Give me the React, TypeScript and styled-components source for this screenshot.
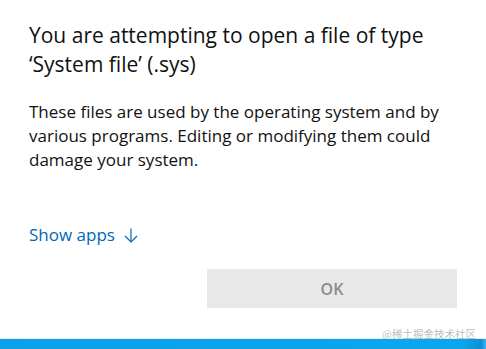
import React from "react";
import styled, { createGlobalStyle } from "styled-components";

const Global = createGlobalStyle`
  html, body { margin: 0; padding: 0; background: #ffffff; }
  body { font-family: "Segoe UI", "Open Sans", "Noto Sans", sans-serif; }
`;

const Page = styled.div`
  position: relative;
  width: 486px;
  height: 349px;
  display: flex;
  flex-direction: column;
  background: #ffffff;
  overflow: hidden;
`;

const Dialog = styled.div`
  flex: 1;
  display: flex;
  flex-direction: column;
  padding: 21px 29px 0 29px;
  border-bottom: 1px solid #ececec;
`;

const Title = styled.h1`
  margin: 0;
  font-size: 21px;
  line-height: 29px;
  font-weight: 400;
  color: #111111;
  white-space: nowrap;
`;

const Body = styled.p`
  margin: 21px 0 0 0;
  font-size: 17px;
  line-height: 24px;
  color: #111111;
  white-space: nowrap;
`;

const LinkRow = styled.div`
  margin-top: 51px;
  display: flex;
`;

const Link = styled.a`
  display: inline-flex;
  align-items: center;
  gap: 9px;
  font-size: 17px;
  line-height: 24px;
  color: #0067b8;
  text-decoration: none;
  cursor: pointer;
`;

const Actions = styled.div`
  display: flex;
  justify-content: flex-end;
  margin-top: 22px;
`;

const OkButton = styled.button`
  width: 250px;
  height: 39px;
  border: none;
  background: #e8e8e8;
  color: #8c8c8c;
  font-family: inherit;
  font-size: 16px;
  font-weight: 600;
`;

const Taskbar = styled.div`
  height: 10px;
  background: linear-gradient(to right, #0aa0ea, #0ca6ee 95%, #0b8fd6 99%, #38b8f2);
`;

const Watermark = styled.span`
  position: absolute;
  right: 10px;
  bottom: 8px;
  font-family: "Noto Sans CJK SC", sans-serif;
  font-size: 10.5px;
  color: rgba(120, 120, 120, 0.5);
`;

const ArrowDown = () => (
  <svg width="14" height="15" viewBox="0 0 14 15" fill="none" stroke="#0067b8" strokeWidth="1.2">
    <path d="M7 0.5 V14" />
    <path d="M1 8 L7 14 L13 8" />
  </svg>
);

export default function App() {
  return (
    <>
      <Global />
      <Page>
        <Dialog>
          <Title>
            You are attempting to open a file of type
            <br />
            ‘System file’ (.sys)
          </Title>
          <Body>
            These files are used by the operating system and by
            <br />
            various programs. Editing or modifying them could
            <br />
            damage your system.
          </Body>
          <LinkRow>
            <Link>
              Show apps <ArrowDown />
            </Link>
          </LinkRow>
          <Actions>
            <OkButton>OK</OkButton>
          </Actions>
        </Dialog>
        <Taskbar />
        <Watermark>@稀土掘金技术社区</Watermark>
      </Page>
    </>
  );
}
